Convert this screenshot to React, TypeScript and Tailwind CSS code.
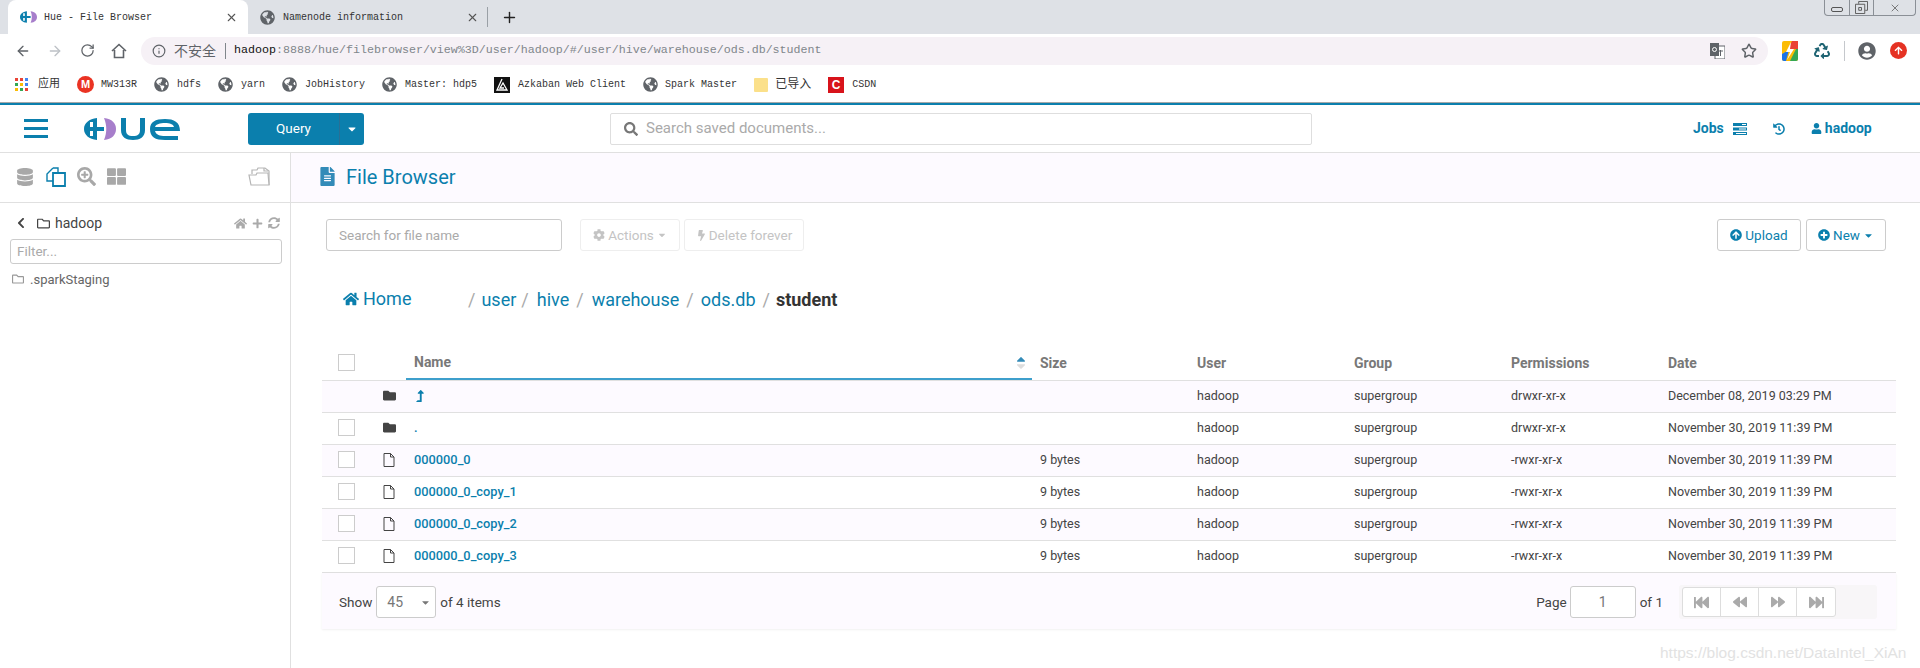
import React from 'react';
import { ArrowLeft, ArrowRight, RotateCw, Info, Star, X, Plus } from 'lucide-react';
import {
  FaGlobeAmericas, FaDatabase, FaSearchPlus, FaThLarge, FaChevronLeft, FaRegFolder,
  FaHome, FaPlus, FaSyncAlt, FaSearch, FaUser, FaHistory, FaFileAlt, FaCog, FaBolt, FaArrowCircleUp, FaPlusCircle,
  FaFolder, FaLevelUpAlt, FaFastBackward, FaBackward, FaForward, FaFastForward, FaCaretDown, FaCaretUp,
  FaRecycle, FaUserCircle, FaArrowUp,
} from 'react-icons/fa';

const chromeFont = "font-['Liberation_Mono','Noto_Sans_CJK_SC',monospace]";

const bookmarks = ['hdfs', 'yarn', 'JobHistory', 'Master: hdp5'];

const rows = [
  { kind: 'up', name: '', size: '', perms: 'drwxr-xr-x', date: 'December 08, 2019 03:29 PM', tint: true },
  { kind: 'dir', name: '.', size: '', perms: 'drwxr-xr-x', date: 'November 30, 2019 11:39 PM', tint: false },
  { kind: 'file', name: '000000_0', size: '9 bytes', perms: '-rwxr-xr-x', date: 'November 30, 2019 11:39 PM', tint: true },
  { kind: 'file', name: '000000_0_copy_1', size: '9 bytes', perms: '-rwxr-xr-x', date: 'November 30, 2019 11:39 PM', tint: false },
  { kind: 'file', name: '000000_0_copy_2', size: '9 bytes', perms: '-rwxr-xr-x', date: 'November 30, 2019 11:39 PM', tint: true },
  { kind: 'file', name: '000000_0_copy_3', size: '9 bytes', perms: '-rwxr-xr-x', date: 'November 30, 2019 11:39 PM', tint: false },
];

function HueMark() {
  return (
    <>
      <path d="M13 1 C5 2 0 6 0 12 C0 18 5 22 13 23 V14 H20 V10 H13 Z" fill="#0b7fad" />
      <path d="M6 5 H9 V10 H6 Z M6 14 H9 V19 H6 Z" fill="#fff" />
      <path d="M20 1 C28 2 32 6 32 12 C32 18 28 22 20 23 C23 16 23 8 20 1 Z" fill="#a77ecb" />
    </>
  );
}

function HueLogo({ className }: { className?: string }) {
  return (
    <svg viewBox="0 0 96 24" className={className}>
      <HueMark />
      <path d="M37 1 V13 C37 20 42 23 49 23 C56 23 61 20 61 13 V1 H56 V13 C56 17 54 19 49 19 C44 19 42 17 42 13 V1 Z" fill="#0b7fad" />
      <path d="M66 12 C66 5 71 2 81 2 C90 2 96 5 96 14 H71 C72 18 76 19 81 19 H94 V23 H81 C71 23 66 20 66 12 Z M71 10 H90 C89 7 86 6 81 6 C76 6 72 7 71 10 Z" fill="#0b7fad" fillRule="evenodd" />
    </svg>
  );
}

function AppsIcon() {
  const colors = ['bg-[#ea4335]', 'bg-[#ea4335]', 'bg-[#4285f4]', 'bg-[#34a853]', 'bg-[#fbbc05]', 'bg-[#4285f4]', 'bg-[#fbbc05]', 'bg-[#34a853]', 'bg-[#ea4335]'];
  return (
    <div className="grid grid-cols-3 gap-[2px] w-[13px]">
      {colors.map((c, i) => (
        <div key={i} className={`h-[3px] w-[3px] ${c}`} />
      ))}
    </div>
  );
}

function Checkbox() {
  return <div className="w-[17px] h-[17px] border border-[#ccc] bg-white" />;
}

function FileIcon() {
  return (
    <svg viewBox="0 0 12 14" className="w-[12px] h-[14px]" fill="none" stroke="#444" strokeWidth="1">
      <path d="M1 .5 H7.5 L11 4 V13.5 H1 Z M7.5 .5 V4 H11" />
    </svg>
  );
}

export default function App() {
  return (
    <div className="relative w-[1920px] h-[668px] overflow-hidden bg-white flex flex-col font-['Roboto',sans-serif] text-[13px] text-[#444]">
      {/* tab strip */}
      <div className="relative h-[34px] shrink-0 bg-[#dee1e6] flex items-end pl-[8px]">
        <div className={`w-[240px] h-[34px] bg-white rounded-t-[8px] flex items-center pl-[12px] pr-[10px] ${chromeFont} text-[10px] text-[#333]`}>
          <svg viewBox="0 0 32 24" className="w-[17px] h-[14px] shrink-0">
            <HueMark />
          </svg>
          <span className="ml-[7px] flex-1 whitespace-pre">Hue - File Browser</span>
          <X size={13} className="text-[#555]" />
        </div>
        <div className={`w-[239px] h-[34px] flex items-center pl-[12px] pr-[8px] ${chromeFont} text-[10px] text-[#333]`}>
          <FaGlobeAmericas size={15} className="text-[#5f6368] shrink-0" />
          <span className="ml-[8px] flex-1">Namenode information</span>
          <X size={13} className="text-[#555]" />
        </div>
        <div className="w-px h-[20px] bg-[#9aa0a6] mb-[7px]" />
        <Plus size={17} className="ml-[13px] mb-[8px] text-[#222]" />
        {/* window buttons */}
        <div className="absolute right-[4px] top-0 w-[92px] h-[16px] flex border border-t-0 border-[#8a8f96] rounded-b-[4px] text-[#555]">
          <div className="w-[25px] flex items-center justify-center border-r border-[#8a8f96]">
            <div className="w-[12px] h-[5px] mt-[3px] border border-[#555] rounded-[2px]" />
          </div>
          <div className="w-[24px] flex items-center justify-center border-r border-[#8a8f96]">
            <svg viewBox="0 0 14 14" className="w-[13px] h-[13px]" fill="none" stroke="#555" strokeWidth="1">
              <path d="M4 3 V.5 H13.5 V10 H11 M.5 3.5 H10.5 V13.5 H.5 Z M4 7 H7 V10 H4 Z" />
            </svg>
          </div>
          <div className="flex-1 flex items-center justify-center">
            <X size={12} strokeWidth={1.5} />
          </div>
        </div>
      </div>

      {/* address bar */}
      <div className="h-[33px] shrink-0 flex items-center pl-[15px]">
        <ArrowLeft size={16} className="text-[#5f6368]" />
        <ArrowRight size={16} className="ml-[16px] text-[#bdc1c6]" />
        <RotateCw size={15} className="ml-[17px] text-[#5f6368]" />
        <svg viewBox="0 0 16 16" className="ml-[16px] w-[16px] h-[16px]" fill="none" stroke="#5f6368" strokeWidth="1.6">
          <path d="M1 8 L8 1.5 L15 8 M3.5 7 V14.5 H12.5 V7" />
        </svg>
        <div className="ml-[14px] w-[1627px] h-[28px] bg-[#f6f1f6] rounded-l-[14px] rounded-r-[14px] flex items-center pl-[11px] pr-[11px]">
          <Info size={14} className="text-[#5f6368]" />
          <span className="ml-[8px] text-[14px] text-[#5f6368] font-['Noto_Sans_CJK_SC',sans-serif]">不安全</span>
          <div className="ml-[9px] w-px h-[16px] bg-[#80868b]" />
          <span className={`ml-[8px] flex-1 ${chromeFont} text-[11.67px] text-[#80868b]`}>
            <span className="text-[#111]">hadoop</span>:8888/hue/filebrowser/view%3D/user/hadoop/#/user/hive/warehouse/ods.db/student
          </span>
          <svg viewBox="0 0 15 16" className="w-[15px] h-[16px]">
            <rect x="5" y="3" width="10" height="13" fill="#fff" stroke="#5f6368" />
            <rect width="9" height="13" fill="#5f6368" />
            <circle cx="4.5" cy="6.5" r="2" fill="none" stroke="#fff" />
            <path d="M8 8 H13 M10.5 7 V13" stroke="#5f6368" />
          </svg>
          <Star size={16} className="ml-[16px] text-[#5f6368]" strokeWidth={2.2} />
        </div>
        <svg viewBox="0 0 16 20" className="ml-[14px] w-[16px] h-[20px]">
          <rect width="16" height="20" rx="2" fill="#fbbc05" />
          <path d="M16 0 V18 a2 2 0 0 1 -2 2 H8 L16 4 Z" fill="#34a853" />
          <path d="M16 0 H10 L6 8 H16 Z" fill="#ea4335" />
          <path d="M0 13 L7 9 L4 20 H2 a2 2 0 0 1 -2 -2 Z" fill="#1a73e8" />
          <path d="M9 1 L4 11 H8 L5 19 L12 8 H8 Z" fill="#fff" />
        </svg>
        <FaRecycle size={16} className="ml-[16px] text-[#1f6473]" />
        <div className="ml-[14px] w-px h-[20px] bg-[#c5c8cc]" />
        <FaUserCircle size={18} className="ml-[13px] text-[#5f6368]" />
        <div className="ml-[14px] w-[17px] h-[17px] rounded-full bg-[#e53223] flex items-center justify-center">
          <FaArrowUp size={9} className="text-white" />
        </div>
      </div>

      {/* bookmarks */}
      <div className={`h-[35px] shrink-0 flex items-center gap-[17px] pl-[15px] ${chromeFont} text-[10px] text-[#333]`}>
        <div className="flex items-center gap-[10px]">
          <AppsIcon />
          <span className="text-[11px]">应用</span>
        </div>
        <div className="flex items-center gap-[7px]">
          <div className="w-[17px] h-[17px] rounded-full bg-[#ea3323] text-white text-[11px] font-bold flex items-center justify-center font-['Liberation_Sans',sans-serif]">M</div>
          <span>MW313R</span>
        </div>
        {bookmarks.map((b) => (
          <div key={b} className="flex items-center gap-[8px]">
            <FaGlobeAmericas size={15} className="text-[#5f6368]" />
            <span>{b}</span>
          </div>
        ))}
        <div className="flex items-center gap-[8px]">
          <svg viewBox="0 0 16 16" className="w-[16px] h-[16px]" fill="none" stroke="#fff" strokeWidth="1.3">
            <rect width="16" height="16" fill="#111" stroke="none" />
            <path d="M8 2 L3 13 H13 L9 6 L6 11 H10" />
          </svg>
          <span>Azkaban Web Client</span>
        </div>
        <div className="flex items-center gap-[7px]">
          <FaGlobeAmericas size={15} className="text-[#5f6368]" />
          <span>Spark Master</span>
        </div>
        <div className="flex items-center gap-[7px]">
          <div className="w-[14px] h-[14px] bg-[#fbe08a] rounded-[1px]" />
          <span className="text-[12px]">已导入</span>
        </div>
        <div className="flex items-center gap-[8px]">
          <div className="w-[16px] h-[16px] bg-[#d8131b] flex items-center justify-center text-white text-[12px] font-bold font-['Liberation_Sans',sans-serif]">C</div>
          <span>CSDN</span>
        </div>
      </div>

      <div className="h-[3px] shrink-0 border-t border-[#a8a8a8] bg-[#0b7fad]" />

      {/* hue navbar */}
      <div className="h-[48px] shrink-0 border-b border-[#e0e0e0] flex items-center pl-[24px]">
        <div className="w-[24px] flex flex-col gap-[5px]">
          <div className="h-[3px] bg-[#0b7fad]" />
          <div className="h-[3px] bg-[#0b7fad]" />
          <div className="h-[3px] bg-[#0b7fad]" />
        </div>
        <HueLogo className="ml-[36px] w-[96px] h-[24px]" />
        <div className="ml-[68px] w-[116px] h-[32px] bg-[#0b7fad] rounded-[3px] flex items-center text-white text-[13.5px]">
          <div className="w-[91px] text-center">Query</div>
          <div className="flex-1 h-full border-l border-[#2a6f95] flex items-center justify-center">
            <FaCaretDown size={12} />
          </div>
        </div>
        <div className="ml-[246px] w-[702px] h-[32px] border border-[#dedede] rounded-[2px] flex items-center pl-[13px] text-[15px] text-[#aaa]">
          <FaSearch size={14} className="text-[#777]" />
          <span className="ml-[8px]">Search saved documents...</span>
        </div>
        <div className="ml-[381px] flex items-center text-[#0b7fad] font-bold text-[14px]">
          <span>Jobs</span>
          <svg viewBox="0 0 14 12" className="ml-[9px] w-[14px] h-[12px]" fill="#0b7fad">
            <rect width="14" height="3" />
            <rect y="4.5" width="14" height="3" />
            <rect y="9" width="14" height="3" />
            <rect x="9" y="1" width="4" height="1" fill="#fff" />
            <rect x="6" y="5.5" width="7" height="1" fill="#fff" />
            <rect x="3" y="10" width="10" height="1" fill="#fff" />
          </svg>
          <FaHistory size={12} className="ml-[26px]" />
          <FaUser size={11} className="ml-[26px]" />
          <span className="ml-[3px]">hadoop</span>
        </div>
      </div>

      <div className="flex-1 flex min-h-0">
        {/* left assist panel */}
        <div className="w-[291px] shrink-0 border-r border-[#e0e0e0] flex flex-col">
          <div className="h-[50px] shrink-0 border-b border-[#e0e0e0] flex items-center pl-[16px] pb-[2px] text-[#a8a8a8]">
            <FaDatabase size={18} />
            <svg viewBox="0 0 20 20" className="ml-[12px] w-[20px] h-[20px]" fill="none" stroke="#0b7fad" strokeWidth="1.4">
              <path d="M7 1 H12 V6 M7 1 L1 7 V14 H7" />
              <path d="M7 6 H19 V19 H7 Z" fill="#fff" strokeWidth="1.8" />
            </svg>
            <FaSearchPlus size={19} className="ml-[11px]" />
            <FaThLarge size={19} className="ml-[11px]" />
            <svg viewBox="0 0 22 20" className="ml-[122px] w-[22px] h-[20px]" fill="none" stroke="#b5b5b5" strokeWidth="1.2">
              <path d="M4 7 V3 H9 L10 1 H17 L21 4 V18" />
              <path d="M1 8 H8 L9 6 H20 L21 18 H3 Z" fill="#fff" />
              <path d="M16 1 V4 H20" />
            </svg>
          </div>
          <div className="h-[30px] mt-[5px] flex items-center pl-[15px] text-[14px] text-[#444]">
            <FaChevronLeft size={12} />
            <FaRegFolder size={13} className="ml-[10px]" />
            <span className="ml-[5px] w-[179px]">hadoop</span>
            <FaHome size={13} className="text-[#aaa]" />
            <FaPlus size={11} className="ml-[5px] text-[#aaa]" />
            <FaSyncAlt size={12} className="ml-[5px] text-[#aaa]" />
          </div>
          <div className="mx-[10px] mt-[0.5px] w-[272px] h-[25px] border border-[#ccc] rounded-[3px] flex items-center pl-[6px] text-[13.5px] text-[#aaa]">Filter...</div>
          <div className="mt-[6px] flex items-center pl-[12px] text-[#666] text-[13px]">
            <FaRegFolder size={12} className="text-[#999]" />
            <span className="ml-[6px]">.sparkStaging</span>
          </div>
        </div>

        {/* right panel */}
        <div className="flex-1 min-w-0 flex flex-col">
          <div className="h-[50px] shrink-0 bg-[#fdfaff] border-b border-[#e0e0e0] flex items-center pl-[27px] pb-[2px]">
            <FaFileAlt size={19} className="text-[#338bb8]" />
            <span className="ml-[9px] text-[20px] text-[#0b7fad]">File Browser</span>
          </div>

          <div className="pl-[31px] pr-[24px] flex flex-col">
            <div className="mt-[16px] h-[32px] pl-[4px] pr-[10px] flex items-center">
              <div className="w-[236px] h-[32px] border border-[#ccc] rounded-[3px] flex items-center pl-[12px] text-[13.5px] text-[#aaa]">Search for file name</div>
              <div className="ml-[18px] w-[100px] h-[32px] border border-[#eee] rounded-[3px] flex items-center justify-center text-[13.5px] text-[#c4c4c4]">
                <FaCog size={12} />
                <span className="ml-[3px]">Actions</span>
                <FaCaretDown size={10} className="ml-[3px]" />
              </div>
              <div className="ml-[4px] w-[120px] h-[32px] border border-[#eee] rounded-[3px] flex items-center justify-center text-[13.5px] text-[#c4c4c4]">
                <FaBolt size={11} />
                <span className="ml-[2px]">Delete forever</span>
              </div>
              <div className="ml-auto w-[84px] h-[32px] border border-[#ccc] rounded-[3px] flex items-center justify-center text-[13.5px] text-[#0b7fad]">
                <FaArrowCircleUp size={12} />
                <span className="ml-[3px]">Upload</span>
              </div>
              <div className="ml-[5px] w-[80px] h-[32px] border border-[#ccc] rounded-[3px] flex items-center justify-center text-[13.5px] text-[#0b7fad]">
                <FaPlusCircle size={12} />
                <span className="ml-[3px]">New</span>
                <FaCaretDown size={11} className="ml-[3px]" />
              </div>
            </div>

            <div className="h-[96px] flex items-center pl-[21px] text-[18px] text-[#0b7fad]">
              <FaHome size={16} />
              <span className="ml-[4px] w-[105px] -translate-y-[1px]">Home</span>
              <span className="text-[#aaa]">/</span>
              <span className="ml-[6px]">user</span>
              <span className="ml-[5px] text-[#aaa]">/</span>
              <span className="ml-[8px]">hive</span>
              <span className="ml-[7px] text-[#aaa]">/</span>
              <span className="ml-[8px]">warehouse</span>
              <span className="ml-[7px] text-[#aaa]">/</span>
              <span className="ml-[7px]">ods.db</span>
              <span className="ml-[7px] text-[#aaa]">/</span>
              <span className="ml-[6px] font-bold text-[#333]">student</span>
            </div>

            {/* file table */}
            <div className="grid grid-cols-[52px_32px_626px_157px_157px_157px_157px_236px] h-[34px] border-b border-[#e0e0e0] items-center text-[14px] font-bold text-[#787878]">
              <div className="pl-[16px] pb-[2px]">
                <Checkbox />
              </div>
              <div />
              <div className="h-full pl-[8px] border-b-2 border-[#3d9fcc] flex items-center justify-between pr-[4px]">
                <span>Name</span>
                <div className="flex flex-col leading-none">
                  <FaCaretUp size={14} className="text-[#338bb8] -mb-[7px]" />
                  <FaCaretDown size={14} className="text-[#ddd]" />
                </div>
              </div>
              <div className="pl-[8px]">Size</div>
              <div className="pl-[8px]">User</div>
              <div className="pl-[8px]">Group</div>
              <div className="pl-[8px]">Permissions</div>
              <div className="pl-[8px]">Date</div>
            </div>
            {rows.map((row, i) => (
              <div
                key={i}
                className={`grid grid-cols-[52px_32px_626px_157px_157px_157px_157px_236px] h-[32px] border-b border-[#e0e0e0] items-center text-[12.5px] ${row.tint ? 'bg-[#fdfaff]' : 'bg-white'}`}
              >
                <div className="pl-[16px] pb-[2px]">{row.kind !== 'up' && <Checkbox />}</div>
                <div className="pl-[9px] pb-[2px]">
                  {row.kind === 'file' ? <FileIcon /> : <FaFolder size={13} className="text-[#444]" />}
                </div>
                <div className="pl-[8px] text-[#0b7fad] font-medium text-[12.8px] pb-[1px]">
                  {row.kind === 'up' ? <FaLevelUpAlt size={12} /> : row.name}
                </div>
                <div className="pl-[8px]">{row.size}</div>
                <div className="pl-[8px]">hadoop</div>
                <div className="pl-[8px]">supergroup</div>
                <div className="pl-[8px]">{row.perms}</div>
                <div className="pl-[8px]">{row.date}</div>
              </div>
            ))}

            {/* pagination */}
            <div className="h-[56px] pt-[2px] bg-[#fdfaff] shadow-[0_1px_2px_rgba(0,0,0,0.06)] flex items-center pl-[17px] pr-[19px] text-[13.5px]">
              <span>Show</span>
              <div className="ml-[4px] w-[60px] h-[32px] bg-white border border-[#ccc] rounded-[3px] flex items-center justify-between pl-[10px] pr-[4px] text-[#777] text-[14px]">
                45
                <FaCaretDown size={11} />
              </div>
              <span className="ml-[4px]">of 4 items</span>
              <span className="ml-auto">Page</span>
              <div className="ml-[3px] w-[66px] h-[32px] bg-white border border-[#ccc] rounded-[3px] flex items-center justify-center text-[#777] text-[14px]">1</div>
              <span className="ml-[4px]">of 1</span>
              <div className="ml-[16px] w-[198px] h-[34px] bg-[#f8f6f8] rounded-[3px] flex items-center pl-[3px]">
                <div className="flex h-[30px] bg-white border border-[#ddd] rounded-[3px] text-[#aaa]">
                  <div className="w-[38px] flex items-center justify-center border-r border-[#ddd]"><FaFastBackward size={15} /></div>
                  <div className="w-[38px] flex items-center justify-center border-r border-[#ddd]"><FaBackward size={14} /></div>
                  <div className="w-[38px] flex items-center justify-center border-r border-[#ddd]"><FaForward size={14} /></div>
                  <div className="w-[38px] flex items-center justify-center"><FaFastForward size={15} /></div>
                </div>
              </div>
            </div>
          </div>
        </div>
      </div>

      {/* blog watermark */}
      <div className="absolute left-[1660px] top-[641px] text-[15.5px] text-[#e2e2e2] font-['Liberation_Sans',sans-serif]">https://blog.csdn.net/DataIntel_XiAn</div>
    </div>
  );
}
